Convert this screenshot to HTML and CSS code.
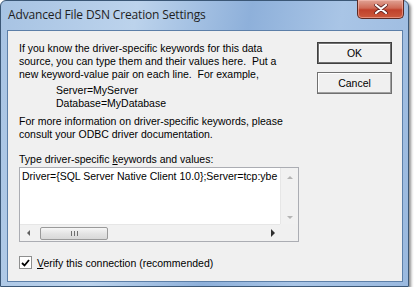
FILE: index.html
```html
<!DOCTYPE html>
<html>
<head>
    <title>Advanced File DSN Creation Settings</title>
    <link rel="stylesheet" href="styles.css">
</head>
<body>
    <div class="window">
        <div class="titlebar">
            <div class="title">Advanced File DSN Creation Settings</div>
            <button class="close-button">
                <svg width="14" height="10" viewBox="0 0 14 10">
                    <path d="M2 1 L12 9 M12 1 L2 9" stroke="#5a2020" stroke-width="3.6" stroke-linecap="round"/>
                    <path d="M2 1 L12 9 M12 1 L2 9" stroke="#ffffff" stroke-width="2.2" stroke-linecap="round"/>
                </svg>
            </button>
        </div>

        <div class="client">
            <div class="main">
                <p class="intro">If you know the driver-specific keywords for this data<br>source, you can type them and their values here.&nbsp; Put a<br>new keyword-value pair on each line.&nbsp; For example,</p>
                <p class="sample">Server=MyServer<br>Database=MyDatabase</p>
                <p class="more">For more information on driver-specific keywords, please<br>consult your ODBC driver documentation.</p>

                <div class="field-label">Type driver-specific <u>k</u>eywords and values:</div>
                <div class="textbox">
                    <div class="textbox-body">
                        <div class="textbox-text">Driver={SQL Server Native Client 10.0};Server=tcp:ybe</div>
                        <div class="vscroll">
                            <span class="arrow-up"></span>
                            <span class="arrow-down"></span>
                        </div>
                    </div>
                    <div class="hscroll-row">
                        <div class="hscroll">
                            <span class="arrow-left"></span>
                            <div class="thumb"><span class="grip"></span></div>
                            <span class="arrow-right"></span>
                        </div>
                        <div class="scroll-corner"></div>
                    </div>
                </div>

                <label class="verify">
                    <span class="checkbox">
                        <svg width="9" height="8" viewBox="0 0 9 8">
                            <path d="M1 4 L3.5 6.5 L8 1" stroke="#000" stroke-width="1.8" fill="none"/>
                        </svg>
                    </span>
                    <span><u>V</u>erify this connection (recommended)</span>
                </label>
            </div>

            <div class="side">
                <button class="dlg-button default">OK</button>
                <button class="dlg-button">Cancel</button>
            </div>
        </div>
    </div>
</body>
</html>
```

FILE: styles.css
```css
body {
    margin: 0;
    background: #ffffff;
    font-family: "Liberation Sans", Arial, sans-serif;
}

/* Window frame */
.window {
    width: 409px;
    height: 287px;
    box-sizing: border-box;
    border: 1px solid #3b5776;
    border-radius: 6px 6px 0 0;
    background: linear-gradient(100deg, #a7c3e3 0%, #bcd3ec 30%, #8eb0da 55%, #a9c5e6 75%, #9ab9df 100%);
    box-shadow: 2px 2px 3px rgba(0, 0, 0, 0.45);
    display: flex;
    flex-direction: column;
}

.titlebar {
    height: 29px;
    display: flex;
    justify-content: space-between;
    align-items: flex-start;
    padding-left: 7px;
    padding-right: 4px;
}

.title {
    font-family: "Open Sans", "Liberation Sans", sans-serif;
    font-size: 12px;
    color: #1e1e1e;
    margin-top: 5px;
    letter-spacing: -0.15px;
}

.close-button {
    width: 47px;
    height: 19px;
    margin-top: -1px;
    border: 1px solid #5b2a24;
    border-top: none;
    border-radius: 0 0 5px 5px;
    background: linear-gradient(#e0a395 0%, #cf6a56 45%, #c0412b 55%, #cc5a3e 100%);
    box-shadow: inset 0 0 0 1px rgba(255, 200, 190, 0.5);
    display: flex;
    align-items: center;
    justify-content: center;
    padding: 0;
}

.client {
    flex: 1;
    margin: 0 5px 4px 6px;
    border: 1px solid #5c7fa8;
    background: #f0f0f0;
    display: flex;
    padding: 11px 10px 0 11px;
    font-size: 10.5px;
    color: #000;
}

.main {
    flex: 1;
}

.main p {
    margin: 0;
    line-height: 13px;
    white-space: nowrap;
}

.sample {
    padding-left: 37px;
    margin-top: 3px !important;
}

.more {
    margin-top: 5px !important;
}

.field-label {
    line-height: 13px;
    margin-top: 12px;
    margin-bottom: 1px;
}

.textbox {
    width: 280px;
    height: 75px;
    box-sizing: border-box;
    border: 1px solid #abadb3;
    background: #ffffff;
    display: flex;
    flex-direction: column;
}

.textbox-body {
    flex: 1;
    display: flex;
}

.textbox-text {
    flex: 1;
    white-space: nowrap;
    overflow: hidden;
    padding: 2px 0 0 2px;
    line-height: 13px;
}

.vscroll {
    width: 17px;
    background: #f1f1f1;
    border-left: 1px solid #e6e6e6;
    position: relative;
}

.arrow-up,
.arrow-down {
    position: absolute;
    left: 6px;
    width: 0;
    height: 0;
    border-left: 3px solid transparent;
    border-right: 3px solid transparent;
}

.arrow-up {
    top: 8px;
    border-bottom: 3px solid #b4b4b4;
}

.arrow-down {
    bottom: 5px;
    border-top: 3px solid #b4b4b4;
}

.hscroll-row {
    height: 17px;
    display: flex;
}

.hscroll {
    flex: 1;
    background: #f1f1f1;
    border-top: 1px solid #e6e6e6;
    display: flex;
    align-items: center;
}

.scroll-corner {
    width: 18px;
    background: #f0f0f0;
}

.arrow-left {
    margin-left: 7px;
    width: 0;
    height: 0;
    border-top: 3px solid transparent;
    border-bottom: 3px solid transparent;
    border-right: 3px solid #606060;
}

.arrow-right {
    margin-left: auto;
    margin-right: 5px;
    width: 0;
    height: 0;
    border-top: 4px solid transparent;
    border-bottom: 4px solid transparent;
    border-left: 4px solid #303030;
}

.thumb {
    margin-left: 10px;
    width: 68px;
    height: 13px;
    box-sizing: border-box;
    border: 1px solid #9a9a9a;
    border-radius: 2px;
    background: linear-gradient(#f6f6f6, #e4e4e4 50%, #d8d8d8);
    display: flex;
    align-items: center;
    justify-content: center;
}

.grip {
    width: 7px;
    height: 5px;
    background: repeating-linear-gradient(90deg, #707070 0 1px, transparent 1px 3px);
}

.verify {
    display: flex;
    align-items: center;
    gap: 5px;
    margin-top: 14px;
}

.checkbox {
    width: 13px;
    height: 13px;
    box-sizing: border-box;
    border: 1px solid #8e8f8f;
    background: #ffffff;
    display: flex;
    align-items: center;
    justify-content: center;
}

/* Buttons */
.side {
    display: flex;
    flex-direction: column;
    gap: 8px;
}

.dlg-button {
    width: 75px;
    height: 22px;
    font-family: "Liberation Sans", Arial, sans-serif;
    font-size: 10.5px;
    color: #000;
    background: #f0f0f0;
    border: 1px solid #707070;
    box-shadow: inset -1px -1px 0 #a0a0a0, inset 1px 1px 0 #ffffff;
    padding: 0;
}

.dlg-button.default {
    border-color: #404040;
    box-shadow: inset 0 0 0 1px #707070, inset 1px 1px 0 1px #ffffff;
}
```
